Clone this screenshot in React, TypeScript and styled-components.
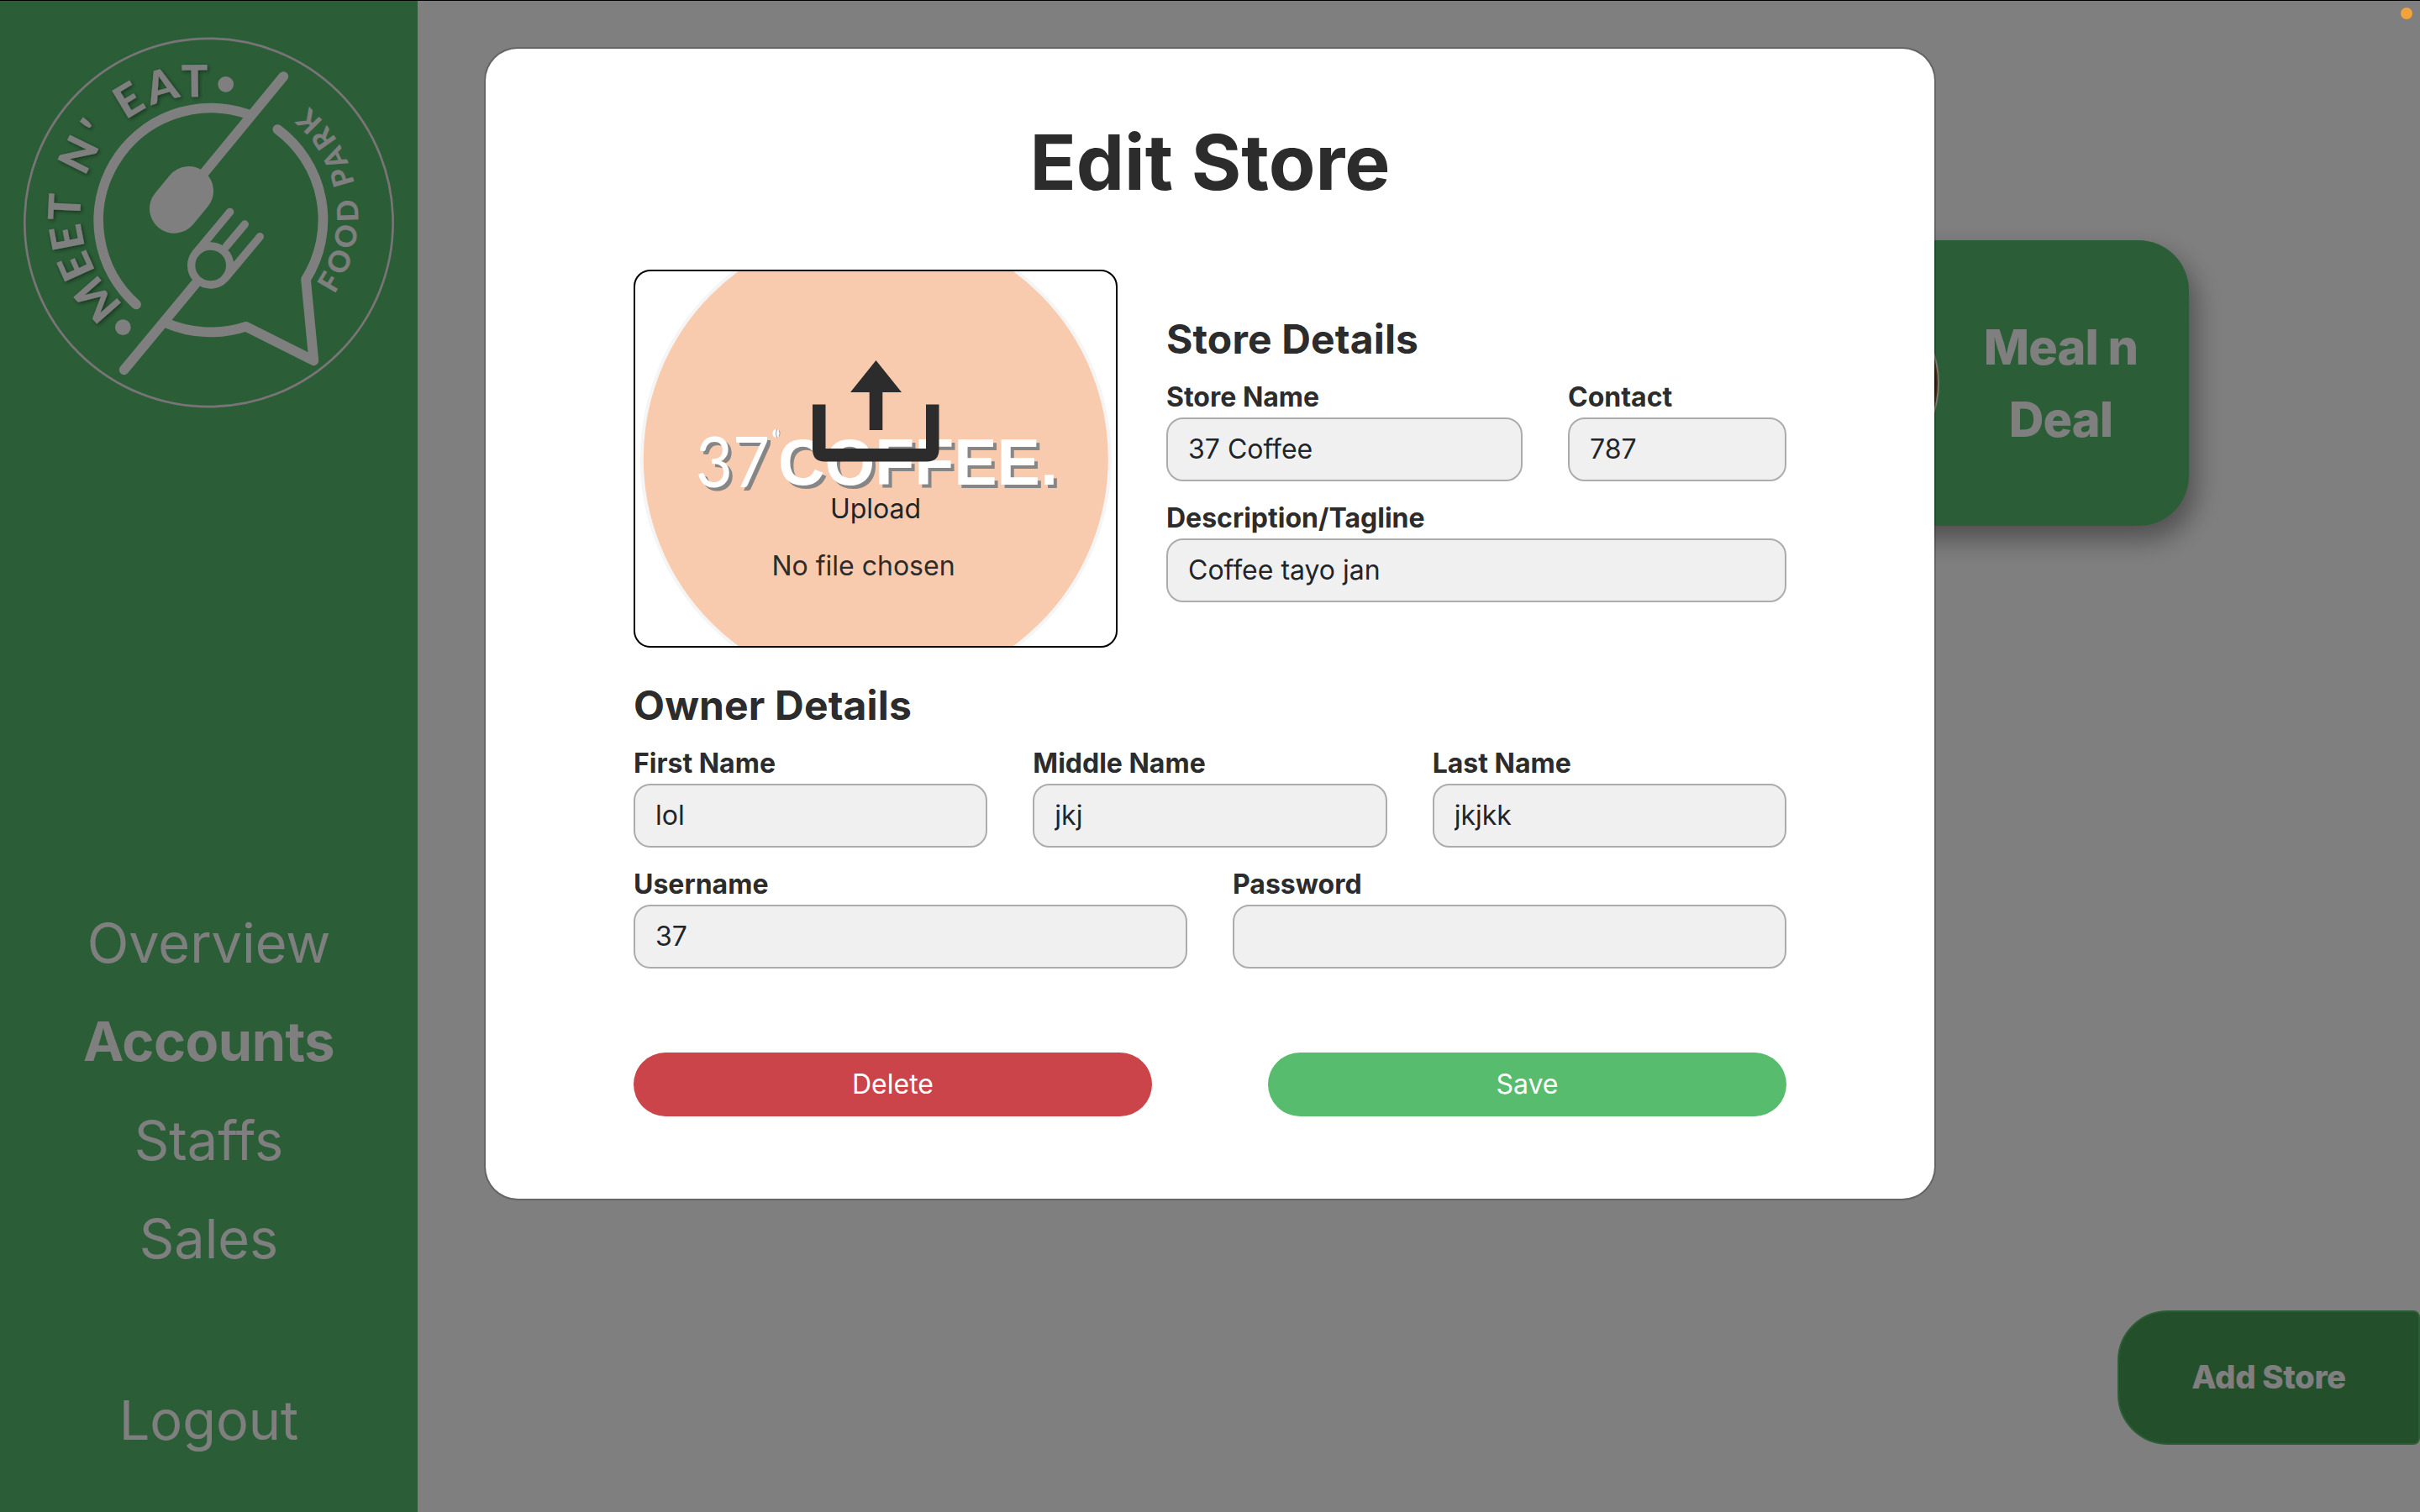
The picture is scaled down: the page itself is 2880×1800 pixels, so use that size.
import React from "react";
import styled, { createGlobalStyle, css } from "styled-components";

const GlobalStyle = createGlobalStyle`
  *, *::before, *::after { box-sizing: border-box; }
  body { margin: 0; font-family: Inter, sans-serif; font-size: 32px; line-height: 1.5; color: #212529; background: #fff; }
  input, button { font: inherit; }
  h1, h2, p { margin: 0; }
`;

const Page = styled.div`
  position: relative;
  display: grid;
  grid-template-columns: 497px 1fr;
  width: 2880px;
  height: 1800px;
  overflow: hidden;
`;

const Sidebar = styled.aside`
  display: flex;
  flex-direction: column;
  align-items: center;
  background: #57bc6e;
`;

const Brand = styled.svg`
  width: 441px;
  height: 442px;
  margin-top: 44px;
  flex: none;
  text { font-family: Lato, sans-serif; font-weight: 900; fill: #fff; }
`;

const Nav = styled.nav`
  display: flex;
  flex-direction: column;
  align-items: center;
  margin-top: 578px;
`;

const NavItem = styled.a<{ $active?: boolean; $last?: boolean }>`
  color: #fff;
  font-size: 64.8px;
  line-height: 117.3px;
  font-weight: ${(p) => (p.$active ? 700 : 400)};
  letter-spacing: ${(p) => (p.$active ? "-0.5px" : "0")};
  font-variant-ligatures: none;
  margin-top: ${(p) => (p.$last ? "99px" : "0")};
`;

const Main = styled.main`
  display: flex;
  flex-direction: column;
  justify-content: space-between;
  align-items: flex-end;
  padding: 286px 0 80px;
`;

const StoreCard = styled.article`
  display: flex;
  align-items: center;
  width: 600px;
  height: 340px;
  margin-right: 275px;
  border-radius: 60px;
  background: #57bc6e;
  box-shadow: 8px 16px 32px rgba(0, 0, 0, 0.38);
`;

const StoreAvatar = styled.div`
  width: 224px;
  height: 224px;
  margin: 0 0 0 79px;
  flex: none;
  border-radius: 50%;
  border: 2px solid #f4ece4;
  background: radial-gradient(circle, #000 0 104px, #8a5a20 109px);
`;

const StoreName = styled.h2`
  flex: 1;
  padding: 0 51px 0 43px;
  font-size: 57.6px;
  font-weight: 800;
  letter-spacing: -0.9px;
  text-align: center;
  color: #fff;
`;

const AddStore = styled.button`
  width: 360px;
  height: 160px;
  border: 2px solid #57bc6e;
  border-radius: 60px 8px 8px 60px;
  background: #479e57;
  color: #fff;
  font-size: 38.4px;
  font-weight: 800;
  letter-spacing: -0.4px;
`;

const Backdrop = styled.div`
  position: absolute;
  inset: 0;
  display: flex;
  justify-content: center;
  align-items: flex-start;
  padding-top: 56px;
  background: rgba(0, 0, 0, 0.5);
`;

const TopEdge = styled.div`
  position: absolute;
  inset: 0 0 auto;
  height: 1px;
  background: #000;
`;

const Indicator = styled.span`
  position: absolute;
  top: 9px;
  right: 9px;
  width: 14px;
  height: 14px;
  border-radius: 50%;
  background: #f3a33b;
`;

const Dialog = styled.section`
  width: 1728px;
  height: 1373px;
  padding: 80px 176px 0;
  border: 2px solid rgba(0, 0, 0, 0.2);
  border-radius: 40px;
  background: #fff;
  background-clip: padding-box;
  color: #2c2c2c;
`;

const Title = styled.h1`
  margin-bottom: 73px;
  font-size: 91px;
  line-height: 110px;
  font-weight: 700;
  text-align: center;
`;

const StoreSection = styled.div`
  display: grid;
  grid-template-columns: 576px 738px;
  column-gap: 58px;
  align-items: center;
`;

const OwnerSection = styled.div`
  margin-top: 40px;
`;

const SectionTitle = styled.h2`
  margin-bottom: 16px;
  font-size: 48px;
  line-height: 58px;
  font-weight: 700;
  letter-spacing: 0.15px;
`;

const Row = styled.div<{ $cols: string }>`
  display: grid;
  grid-template-columns: ${(p) => p.$cols};
  column-gap: 54px;
  & + & { margin-top: 20px; }
`;

const Label = styled.label`
  display: block;
  min-width: 0;
  font-weight: 700;
  line-height: 48px;
`;

const Input = styled.input`
  display: block;
  width: 100%;
  height: 76px;
  padding: 0 24px 2px;
  border: 2px solid #acacac;
  border-radius: 20px;
  background: #f0f0f0;
  color: #212529;
  font-weight: 400;
`;

const UploadBox = styled.div`
  display: grid;
  height: 450px;
  border: 2px solid #000;
  border-radius: 20px;
  overflow: hidden;
  & > * { grid-area: 1 / 1; }
`;

const Preview = styled.svg`
  width: 572px;
  height: 446px;
`;

const PreviewWordmark = styled.g`
  fill: #fff;
  filter: drop-shadow(4px 4px 0 #868686);
`;

const UploadContent = styled.div`
  position: relative;
  display: flex;
  flex-direction: column;
  align-items: center;
  padding-top: 106px;
`;

const UploadIcon = styled.svg`
  width: 151px;
  height: 121px;
`;

const UploadText = styled.p<{ $file?: boolean }>`
  line-height: 48px;
  margin-top: ${(p) => (p.$file ? "20px" : "32px")};
  color: #212529;
  ${(p) => p.$file && css`
    color: #2c2c2c;
    margin-right: 29px;
  `}
`;

const Actions = styled.div`
  display: flex;
  justify-content: space-between;
  margin-top: 100px;
`;

const Action = styled.button<{ $tone: string }>`
  width: 617px;
  height: 76px;
  border: 0;
  border-radius: 38px;
  background: ${(p) => p.$tone};
  color: #fff;
`;

function Logo() {
  return (
    <Brand viewBox="84 132 1323 1326">
      <defs>
        <path id="arc-left" d="M 494 1118.5 A 414 414 0 1 1 1115 760" />
        <path id="arc-right" d="M 1193.7 1050.7 A 513 513 0 0 0 1050 342" />
        <filter id="soft" x="-10%" y="-10%" width="120%" height="120%">
          <feDropShadow dx="5" dy="5" stdDeviation="8" floodColor="#000" floodOpacity="0.45" />
        </filter>
      </defs>
      <circle cx="745.5" cy="795" r="657.5" fill="none" stroke="#f3e9ee" strokeWidth="8" />
      <g fill="none" stroke="#fff" strokeWidth="35" strokeLinecap="round" strokeLinejoin="round">
        <path d="M486 1087 A401.5 401.5 0 0 1 885 408" />
        <path d="M991 462 A401.5 401.5 0 0 1 1092 998 L1120 1288 L878 1166 A401.5 401.5 0 0 1 592 1153" />
        <path d="M1012 273 L725 622" />
        <path d="M700 1011 L443 1321" />
        <path d="M674 682 L622 745" strokeWidth="176" />
        <g strokeWidth="28">
          <circle cx="752" cy="948" r="69" />
          <path d="M821 757 L699 904" />
          <path d="M874 801 L808 880" />
          <path d="M928 845 L805 992" />
        </g>
      </g>
      <circle cx="806" cy="301" r="28" fill="#fff" />
      <circle cx="439" cy="1169" r="28" fill="#fff" />
      <g fontSize="158" filter="url(#soft)">
        <text><textPath href="#arc-left" startOffset="60" textLength="440">MEET</textPath></text>
        <text><textPath href="#arc-left" startOffset="563" textLength="170">N'</textPath></text>
        <text><textPath href="#arc-left" startOffset="814" textLength="312">EAT</textPath></text>
      </g>
      <text fontSize="104">
        <textPath href="#arc-right" textLength="735">FOOD PARK</textPath>
      </text>
    </Brand>
  );
}

function StorePreview() {
  return (
    <Preview viewBox="756 323 572 446">
      <circle cx="1042.3" cy="546" r="278.5" fill="#f8cbae" stroke="#f5f5f5" strokeWidth="4" />
      <PreviewWordmark>
        <text x="828" y="580" fontFamily="Lato" fontSize="83" textLength="88" lengthAdjust="spacingAndGlyphs">37</text>
        <text x="926" y="577" fontFamily="Liberation Sans" fontWeight="700" fontSize="78" textLength="333" lengthAdjust="spacingAndGlyphs">COFFEE.</text>
      </PreviewWordmark>
      <ellipse cx="923.7" cy="516" rx="4.3" ry="5" fill="#fff" />
      <path d="M924.5 511 q-2 5 0 10 M927.5 512.500 q1.500 4 -0.500 7" fill="none" stroke="#999" strokeWidth="1" />
    </Preview>
  );
}

function Field({ label, value, type = "text" }: { label: string; value: string; type?: string }) {
  return (
    <Label>
      {label}
      <Input type={type} defaultValue={value} />
    </Label>
  );
}

export default function App() {
  return (
    <>
      <GlobalStyle />
      <Page>
        <Sidebar>
          <Logo />
          <Nav>
            <NavItem>Overview</NavItem>
            <NavItem $active>Accounts</NavItem>
            <NavItem>Staffs</NavItem>
            <NavItem>Sales</NavItem>
            <NavItem $last>Logout</NavItem>
          </Nav>
        </Sidebar>
        <Main>
          <StoreCard>
            <StoreAvatar />
            <StoreName>Meal n Deal</StoreName>
          </StoreCard>
          <AddStore>Add Store</AddStore>
        </Main>
        <Backdrop>
          <Dialog>
            <Title>Edit Store</Title>
            <StoreSection>
              <UploadBox>
                <StorePreview />
                <UploadContent>
                  <UploadIcon viewBox="0 0 151 121" fill="#2c2c2c">
                    <path d="M75.5 0 L106 38 H83.3 V83 H67.7 V38 H45 Z" />
                    <path d="M0 52.4 H15.5 V105 H135 V52.4 H150.5 V106 Q150.5 120.5 136 120.5 H14.5 Q0 120.5 0 106 Z" />
                  </UploadIcon>
                  <UploadText>Upload</UploadText>
                  <UploadText $file>No file chosen</UploadText>
                </UploadContent>
              </UploadBox>
              <div>
                <SectionTitle>Store Details</SectionTitle>
                <Row $cols="424px 260px">
                  <Field label="Store Name" value="37 Coffee" />
                  <Field label="Contact" value="787" />
                </Row>
                <Row $cols="1fr">
                  <Field label="Description/Tagline" value="Coffee tayo jan" />
                </Row>
              </div>
            </StoreSection>
            <OwnerSection>
              <SectionTitle>Owner Details</SectionTitle>
              <Row $cols="1fr 1fr 1fr">
                <Field label="First Name" value="lol" />
                <Field label="Middle Name" value="jkj" />
                <Field label="Last Name" value="jkjkk" />
              </Row>
              <Row $cols="1fr 1fr">
                <Field label="Username" value="37" />
                <Field label="Password" value="" type="password" />
              </Row>
            </OwnerSection>
            <Actions>
              <Action $tone="#cb444a">Delete</Action>
              <Action $tone="#57bc6e">Save</Action>
            </Actions>
          </Dialog>
        </Backdrop>
        <TopEdge />
        <Indicator />
      </Page>
    </>
  );
}
